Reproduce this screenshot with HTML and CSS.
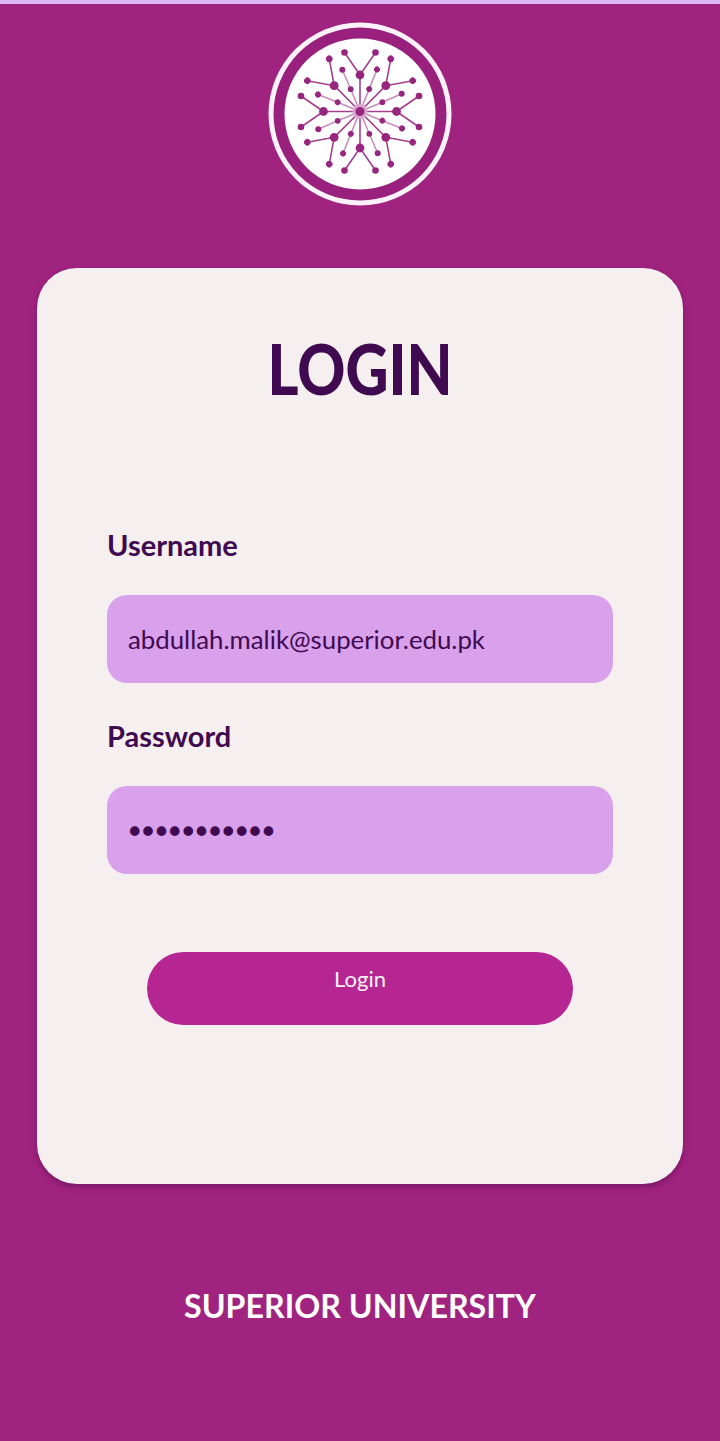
FILE: index.html
```html
<!DOCTYPE html>
<html lang="en">
<head>
<meta charset="utf-8">
<title>Login</title>
<link rel="stylesheet" href="styles.css">
</head>
<body>
<div class="status-strip"></div>
<main class="screen">
  <svg class="logo" viewBox="-92 -92 184 184" aria-label="Logo">
    <defs>
      <g id="unit">
        <path class="line" d="M0 0V-36.5M0-36.5L-15.5-59M0-36.5L15.5-59"/>
        <path class="line thin" d="M0 0L-9.3-22.3L-17.7-41.7"/>
        <circle class="node" cy="-36.5" r="4.4"/>
        <circle class="node" cx="-15.5" cy="-59" r="3.3"/>
        <circle class="node" cx="15.5" cy="-59" r="3.3"/>
        <circle class="node" cx="-9.3" cy="-22.3" r="2.9"/>
        <circle class="node" cx="-17.7" cy="-41.7" r="3"/>
      </g>
    </defs>
    <circle class="ring-outer" r="91.5"/>
    <circle class="ring-band" r="86.5"/>
    <circle class="ring-inner" r="75.5"/>
    <g class="emblem">
      <use href="#unit"/>
      <use href="#unit" transform="rotate(45)"/>
      <use href="#unit" transform="rotate(90)"/>
      <use href="#unit" transform="rotate(135)"/>
      <use href="#unit" transform="rotate(180)"/>
      <use href="#unit" transform="rotate(225)"/>
      <use href="#unit" transform="rotate(270)"/>
      <use href="#unit" transform="rotate(315)"/>
      <circle class="hub-halo" r="7.5"/>
      <circle class="node" r="4.5"/>
    </g>
  </svg>

  <section class="card">
    <h1 class="title">LOGIN</h1>
    <form class="form">
      <div class="field-label">Username</div>
      <div class="field">abdullah.malik@superior.edu.pk</div>
      <div class="field-label second">Password</div>
      <div class="field dots">•••••••••••</div>
      <div class="button"><span>Login</span></div>
    </form>
  </section>

  <footer class="brand">SUPERIOR UNIVERSITY</footer>
</main>
</body>
</html>
```
FILE: styles.css
```css
* { box-sizing: border-box; }
html, body { margin: 0; }
body {
  width: 720px;
  height: 1441px;
  overflow: hidden;
  background: #a12380;
  font-family: "Lato", "Noto Sans", sans-serif;
  color: #3f0a4f;
}
.status-strip { height: 4px; background: #d9b8f5; }
.screen {
  display: flex;
  flex-direction: column;
  align-items: center;
  padding-top: 18px;
}
.logo { width: 184px; height: 184px; display: block; filter: blur(0.6px); }
.ring-outer { fill: #fdf2fa; }
.ring-band { fill: #99207c; }
.ring-inner { fill: #fff; }
.emblem { transform: translateY(-2.5px); }
.line { fill: none; stroke: #a5408f; stroke-width: 1.6; }
.line.thin { stroke: #c68fbc; }
.node { fill: #97267f; }
.hub-halo { fill: #d9a5cf; }

.card {
  width: 646px;
  height: 916px;
  margin-top: 62px;
  padding-top: 60px;
  background: #f5eff0;
  border-radius: 40px;
  box-shadow: 0 3px 6px rgba(60, 10, 60, 0.4);
}
.title {
  margin: 0;
  height: 80px;
  line-height: 80px;
  text-align: center;
  font-size: 70px;
  font-weight: 900;
  transform: scaleX(0.85);
}
.form {
  display: flex;
  flex-direction: column;
  padding: 0 70px;
  margin-top: 117px;
}
.field-label {
  height: 40px;
  line-height: 40px;
  font-size: 29px;
  font-weight: 700;
}
.field-label.second { margin-top: 33px; }
.field {
  height: 88px;
  margin-top: 30px;
  padding-left: 21px;
  line-height: 88px;
  font-size: 25.8px;
  background: #d9a0ec;
  border-radius: 20px;
}
.dots {
  font-family: "DejaVu Sans", sans-serif;
  font-size: 33px;
  line-height: 94px;
  letter-spacing: -6.1px;
  padding-left: 18px;
}
.button {
  align-self: center;
  width: 426px;
  height: 73px;
  margin-top: 78px;
  padding-top: 9px;
  text-align: center;
  line-height: 36px;
  font-size: 22px;
  color: #fdf4fb;
  background: #b52693;
  border-radius: 37px;
}
.brand {
  margin-top: 102px;
  height: 40px;
  line-height: 40px;
  font-size: 32.2px;
  font-weight: 700;
  color: #fff;
}
```
